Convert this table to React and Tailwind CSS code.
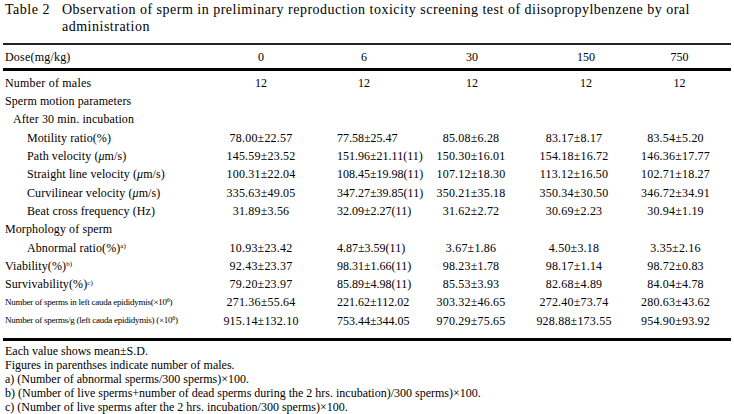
const rows = [
  { label: 'Sperm motion parameters', indent: 0 },
  { label: 'After 30 min. incubation', indent: 1 },
  { label: 'Motility ratio(%)', indent: 2, v: ['78.00±22.57', '77.58±25.47', '85.08±6.28', '83.17±8.17', '83.54±5.20'] },
  { label: <>Path velocity (<i>μ</i>m/s)</>, indent: 2, v: ['145.59±23.52', '151.96±21.11(11)', '150.30±16.01', '154.18±16.72', '146.36±17.77'] },
  { label: <>Straight line velocity (<i>μ</i>m/s)</>, indent: 2, v: ['100.31±22.04', '108.45±19.98(11)', '107.12±18.30', '113.12±16.50', '102.71±18.27'] },
  { label: <>Curvilinear velocity (<i>μ</i>m/s)</>, indent: 2, v: ['335.63±49.05', '347.27±39.85(11)', '350.21±35.18', '350.34±30.50', '346.72±34.91'] },
  { label: 'Beat cross frequency (Hz)', indent: 2, v: ['31.89±3.56', '32.09±2.27(11)', '31.62±2.72', '30.69±2.23', '30.94±1.19'] },
  { label: 'Morphology of sperm', indent: 0 },
  { label: <>Abnormal ratio(%)<sup className="text-[7px]">a)</sup></>, indent: 2, v: ['10.93±23.42', '4.87±3.59(11)', '3.67±1.86', '4.50±3.18', '3.35±2.16'] },
  { label: <>Viability(%)<sup className="text-[7px]">b)</sup></>, indent: 0, v: ['92.43±23.37', '98.31±1.66(11)', '98.23±1.78', '98.17±1.14', '98.72±0.83'] },
  { label: <>Survivability(%)<sup className="text-[7px]">c)</sup></>, indent: 0, v: ['79.20±23.97', '85.89±4.98(11)', '85.53±3.93', '82.68±4.89', '84.04±4.78'] },
  { label: <>Number of sperms in left cauda epididymis(×10<sup className="text-[6px]">6</sup>)</>, indent: 0, small: true, v: ['271.36±55.64', '221.62±112.02', '303.32±46.65', '272.40±73.74', '280.63±43.62'] },
  { label: <>Number of sperms/g (left cauda epididymis) (×10<sup className="text-[6px]">6</sup>)</>, indent: 0, small: true, v: ['915.14±132.10', '753.44±344.05', '970.29±75.65', '928.88±173.55', '954.90±93.92'] },
];

const grid = 'grid grid-cols-[205px_106px_100px_114px_92px_111px]';
const indents = ['pl-[2px]', 'pl-[10px]', 'pl-[24px]'];

function Cells({ v }) {
  if (!v) return null;
  return v.map((x, i) => (
    <div key={i} className={i === 1 ? 'pl-[23px] whitespace-nowrap' : 'text-center whitespace-nowrap tracking-[0.2px]'}>
      {x}
    </div>
  ));
}

function HeadCells({ v }) {
  const pads = ['', '', 'pl-[2px]', 'pl-[24px]', 'pl-[8px]'];
  return v.map((x, i) => (
    <div key={i} className={`text-center ${pads[i]}`}>{x}</div>
  ));
}

export default function App() {
  return (
    <div className="w-[734px] h-[414px] bg-white text-black overflow-hidden font-['Liberation_Serif',serif] text-[12px]">
      <div className="flex pt-[1px] pl-[5px] text-[14px] leading-[17px] tracking-[0.5px]">
        <div className="w-[57px] shrink-0">Table 2</div>
        <div className="w-[665px]">
          Observation of sperm in preliminary reproduction toxicity screening test of diisopropylbenzene by oral administration
        </div>
      </div>
      <div className="mx-[3px] mt-[8px]">
        <div className="h-[2px] bg-[#222]" />
        <div className={`${grid} h-[23px] items-center`}>
          <div className="pl-[2px] tracking-[0.2px]">Dose(mg/kg)</div>
          <HeadCells v={['0', '6', '30', '150', '750']} />
        </div>
        <div className="h-[3px] bg-black" />
        <div className={`${grid} h-[21px] items-center pt-[3px]`}>
          <div className="pl-[2px] tracking-[0.2px]">Number of males</div>
          <HeadCells v={['12', '12', '12', '12', '12']} />
        </div>
        <div className="pb-[8px]">
          {rows.map((r, i) => (
            <div key={i} className={`${grid} h-[18.3px] items-center`}>
              <div className={`${indents[r.indent]} whitespace-nowrap ${r.small ? 'text-[9px] tracking-[-0.25px]' : 'tracking-[0.1px]'}`}>
                {r.label}
              </div>
              <Cells v={r.v} />
            </div>
          ))}
        </div>
        <div className="h-[3px] bg-black" />
      </div>
      <div className="pl-[5px] mt-[3px] leading-[14px]">
        <div>Each value shows mean±S.D.</div>
        <div>Figures in parenthses indicate number of males.</div>
        <div>a) (Number of abnormal sperms/300 sperms)×100.</div>
        <div>b) (Number of live sperms+number of dead sperms during the 2 hrs. incubation)/300 sperms)×100.</div>
        <div>c) (Number of live sperms after the 2 hrs. incubation/300 sperms)×100.</div>
      </div>
    </div>
  );
}
